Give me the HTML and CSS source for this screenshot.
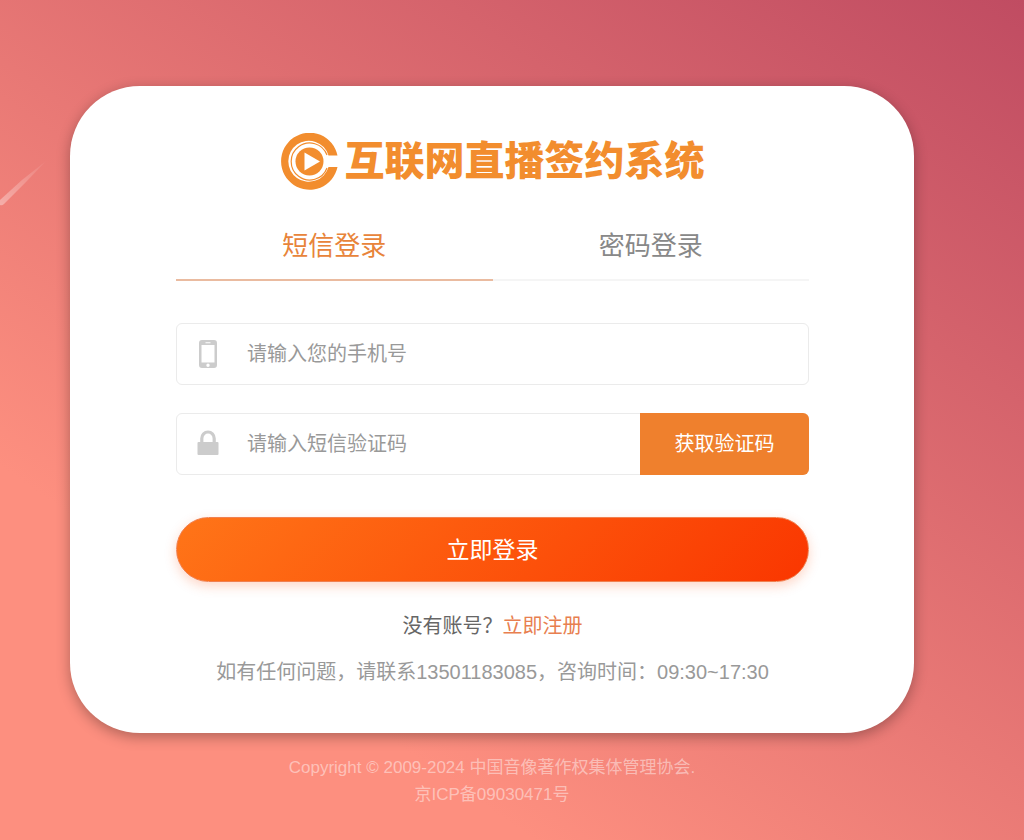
FILE: index.html
```html
<!DOCTYPE html>
<html lang="zh-CN">
<head>
    <meta charset="UTF-8">
    <meta name="viewport" content="width=device-width, initial-scale=1.0">
    <title>互联网直播签约系统</title>
    <link rel="stylesheet" href="styles.css">
</head>
<body>
    <!-- Meteor -->
    <svg class="meteor" viewBox="0 0 48 48" aria-hidden="true">
        <defs>
            <linearGradient id="tail" x1="0" y1="1" x2="1" y2="0">
                <stop offset="0" stop-color="#fff" stop-opacity="0.36"></stop>
                <stop offset="1" stop-color="#fff" stop-opacity="0.05"></stop>
            </linearGradient>
        </defs>
        <path d="M0 40 L22 20 L46 1 L25 23 L4 44 Q2 46 0 45 Z" fill="url(#tail)"></path>
    </svg>

    <main class="container">
        <div class="login-box">
            <h1 class="logo">
                <svg class="logo-mark" viewBox="0 0 57 57" aria-hidden="true">
                    <path d="M56.500 22.500 A28.500 28.500 0 1 0 56.500 34 L47.500 34 A20.500 20.500 0 1 1 47.500 22.500 Z" fill="#f28d2e"></path>
                    <path d="M46 22 A18.500 18.500 0 1 0 46 35" fill="none" stroke="#f28d2e" stroke-width="1.200"></path>
                    <circle cx="28.500" cy="28.500" r="14" fill="#f28d2e"></circle>
                    <path d="M23.500 19.500 L39 28.500 L23.500 37.500 Z" fill="#fff"></path>
                </svg>
                <span class="logo-text">互联网直播签约系统</span>
            </h1>

            <!-- Login Tabs -->
            <div class="tabs">
                <button type="button" class="tab active">短信登录</button>
                <button type="button" class="tab">密码登录</button>
            </div>

            <!-- Login Form -->
            <form>
                <div class="form-group">
                    <label for="phone" aria-label="手机号">
                        <svg class="icon" viewBox="0 0 24 30" aria-hidden="true">
                            <path fill-rule="evenodd" d="M6 1 H18 Q21 1 21 4 V26 Q21 29 18 29 H6 Q3 29 3 26 V4 Q3 1 6 1 Z M5.500 6 V23.500 H18.500 V6 Z M9.500 3.200 V4.300 H14.500 V3.200 Z M12 24.500 A1.700 1.700 0 1 0 12 27.900 A1.700 1.700 0 1 0 12 24.500 Z" fill="#ccc"></path>
                        </svg>
                    </label>
                    <input type="text" id="phone" placeholder="请输入您的手机号">
                </div>
                <div class="form-group">
                    <label for="code" aria-label="短信验证码">
                        <svg class="icon" viewBox="0 0 24 30" aria-hidden="true">
                            <path d="M5.800 15 V9.500 A6.200 6.500 0 0 1 18.200 9.500 V15" fill="none" stroke="#ccc" stroke-width="3.200"></path>
                            <rect x="1.500" y="13" width="21" height="13" rx="1" fill="#ccc"></rect>
                        </svg>
                    </label>
                    <input type="text" id="code" placeholder="请输入短信验证码">
                    <button type="button" class="code-btn">获取验证码</button>
                </div>
                <button type="submit" class="login-btn">立即登录</button>
            </form>

            <p class="register">没有账号？<a href="#">立即注册</a></p>
            <p class="contact">如有任何问题，请联系13501183085，咨询时间：09:30~17:30</p>
        </div>

        <footer class="footer">
            <p>Copyright © 2009-2024 中国音像著作权集体管理协会.</p>
            <p>京ICP备09030471号</p>
        </footer>
    </main>
</body>
</html>
```
FILE: styles.css
```css
* {
    box-sizing: border-box;
}
body {
    font-family: "Liberation Sans", "Noto Sans CJK SC", sans-serif;
    margin: 0;
    padding: 86px 110px 0 70px;
    min-height: 100vh;
    background: linear-gradient(35deg, #fd8f7f 24%, #c04c62 100%);
}
button,
input {
    font-family: inherit;
}
.meteor {
    position: absolute;
    left: 0;
    top: 160px;
    width: 48px;
    height: 48px;
}
.container {
    max-width: 844px;
    margin: 0 auto;
}
.login-box {
    padding: 47px 105px 46px 106px;
    background-color: white;
    border-radius: 70px;
    box-shadow: 0 4px 14px rgba(0, 0, 0, 0.3);
}
.logo {
    display: flex;
    align-items: center;
    justify-content: center;
    gap: 7px;
    margin: 0;
    color: #f28d2e;
    font-size: 40px;
    font-weight: 900;
    line-height: 57px;
    white-space: nowrap;
}
.logo-mark {
    width: 57px;
    height: 57px;
}
.tabs {
    display: flex;
    margin-top: 20px;
}
.tab {
    flex: 1;
    height: 71px;
    padding: 0 0 2px;
    border: none;
    border-bottom: 2px solid #f5f5f5;
    background: none;
    color: #888;
    font-size: 26px;
    cursor: pointer;
}
.tab.active {
    border-bottom-color: #eabba0;
    color: #e8843a;
}
form {
    padding-top: 42px;
}
.form-group {
    display: flex;
    align-items: center;
    height: 62px;
    margin-bottom: 28px;
    border: 1px solid #ebebeb;
    border-radius: 6px;
}
.form-group label {
    display: flex;
    padding: 0 27px 0 19px;
}
.icon {
    width: 24px;
    height: 30px;
}
.form-group input {
    flex: 1;
    min-width: 0;
    height: 100%;
    padding: 0;
    border: none;
    outline: none;
    background: none;
    color: #333;
    font-size: 20px;
}
.form-group input::placeholder {
    color: #999;
}
.code-btn {
    width: 169px;
    height: 62px;
    margin-right: -1px;
    padding: 0 0 4px;
    border: none;
    border-radius: 0 6px 6px 0;
    background-color: #ef802d;
    color: white;
    font-size: 20px;
    cursor: pointer;
}
.login-btn {
    width: 100%;
    height: 65px;
    margin-top: 14px;
    padding: 0 0 4px;
    border: 1px solid #f08050;
    border-radius: 33px;
    background: linear-gradient(135deg, #ff7518, #fa3600) border-box;
    box-shadow: 0 4px 12px rgba(250, 90, 30, 0.25);
    color: white;
    font-size: 23px;
    cursor: pointer;
}
.register,
.contact {
    margin: 0;
    font-size: 20px;
    line-height: 30px;
    text-align: center;
}
.register {
    margin-top: 29px;
    color: #666;
}
.register a {
    color: #e87f50;
    text-decoration: none;
}
.contact {
    margin-top: 16px;
    color: #999;
}
.footer {
    padding-top: 21px;
    color: rgba(255, 255, 255, 0.45);
    font-size: 17px;
    line-height: 27px;
    text-align: center;
}
.footer p {
    margin: 0;
}
```
